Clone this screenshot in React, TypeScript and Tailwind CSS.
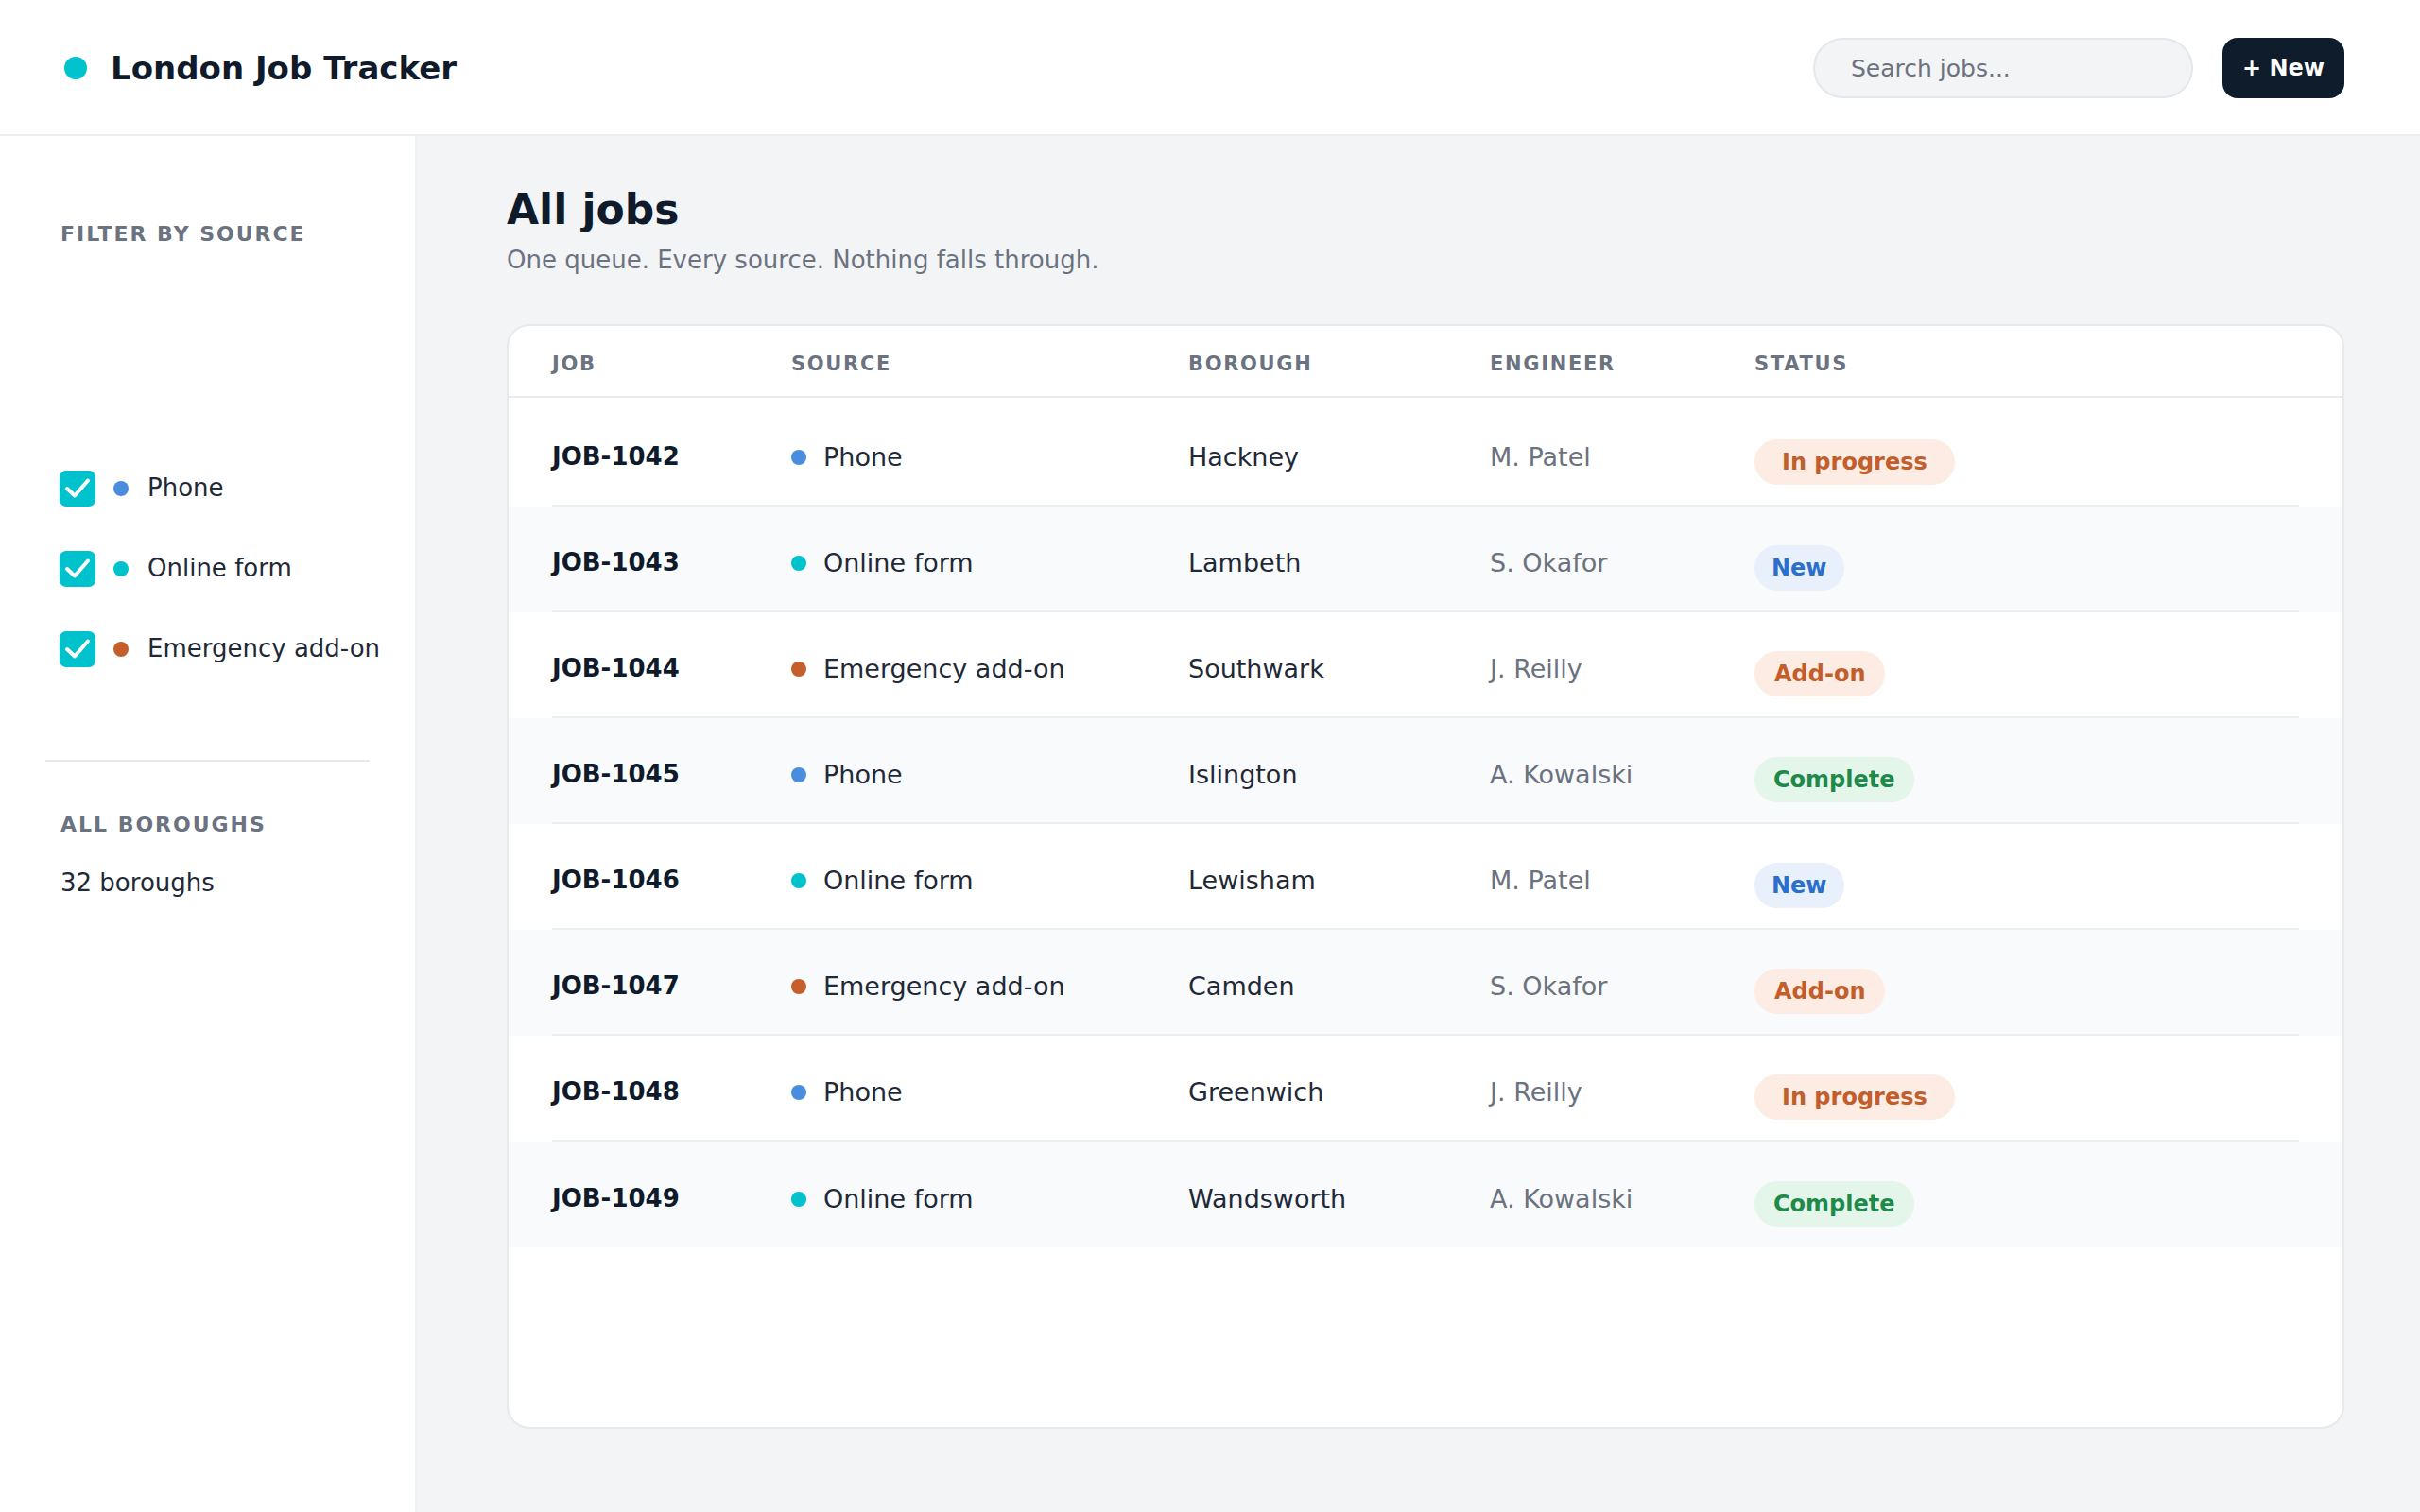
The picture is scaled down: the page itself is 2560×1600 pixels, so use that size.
type Status = "In progress" | "New" | "Add-on" | "Complete";

type Job = {
  id: string;
  source: "Phone" | "Online form" | "Emergency add-on";
  borough: string;
  engineer: string;
  status: Status;
};

const jobs: Job[] = [
  { id: "JOB-1042", source: "Phone", borough: "Hackney", engineer: "M. Patel", status: "In progress" },
  { id: "JOB-1043", source: "Online form", borough: "Lambeth", engineer: "S. Okafor", status: "New" },
  { id: "JOB-1044", source: "Emergency add-on", borough: "Southwark", engineer: "J. Reilly", status: "Add-on" },
  { id: "JOB-1045", source: "Phone", borough: "Islington", engineer: "A. Kowalski", status: "Complete" },
  { id: "JOB-1046", source: "Online form", borough: "Lewisham", engineer: "M. Patel", status: "New" },
  { id: "JOB-1047", source: "Emergency add-on", borough: "Camden", engineer: "S. Okafor", status: "Add-on" },
  { id: "JOB-1048", source: "Phone", borough: "Greenwich", engineer: "J. Reilly", status: "In progress" },
  { id: "JOB-1049", source: "Online form", borough: "Wandsworth", engineer: "A. Kowalski", status: "Complete" },
];

const dotColor: Record<Job["source"], string> = {
  Phone: "bg-[#4a8ddf]",
  "Online form": "bg-[#00c2cc]",
  "Emergency add-on": "bg-[#c45e2c]",
};

const badgeStyle: Record<Status, string> = {
  "In progress": "bg-[#fdece3] text-[#c25e2b] px-[29px]",
  New: "bg-[#e8f0fc] text-[#2a6fcb] px-[18px]",
  "Add-on": "bg-[#fdece3] text-[#c25e2b] px-[21px]",
  Complete: "bg-[#e4f5ea] text-[#1e8a4a] px-[20px]",
};

const cols = "grid grid-cols-[253px_420px_319px_280px_1fr]";

function Checkbox() {
  return (
    <div className="w-[38px] h-[38px] rounded-[7px] bg-[#00c2cc] flex items-center justify-center shrink-0">
      <svg width="38" height="38" viewBox="0 0 38 38" fill="none">
        <path d="M8 19 L16 26.5 L30 10.5" stroke="white" strokeWidth="4" strokeLinecap="round" strokeLinejoin="round" />
      </svg>
    </div>
  );
}

function Sidebar() {
  const sources: Job["source"][] = ["Phone", "Online form", "Emergency add-on"];
  return (
    <aside className="w-[441px] shrink-0 bg-white border-r-2 border-[#eef0f3] px-[48px] pt-[87px]">
      <div className="px-[16px]">
        <h3 className="text-[22px] leading-[33px] font-bold tracking-[0.09em] text-[#6b7280]">FILTER BY SOURCE</h3>
      </div>
      <div className="mt-[233px] px-[15px] flex flex-col gap-[46px]">
        {sources.map((s) => (
          <label key={s} className="h-[39px] flex items-center whitespace-nowrap">
            <Checkbox />
            <span className={`ml-[19px] w-4 h-4 rounded-full shrink-0 ${dotColor[s]}`} />
            <span className="ml-[20px] text-[26px] leading-[39px] text-[#1f2937]">{s}</span>
          </label>
        ))}
      </div>
      <div className="mt-[98px] h-[2px] bg-[#e7e9ed]" />
      <div className="px-[16px] mt-[50px]">
        <h3 className="text-[22px] leading-[33px] font-bold tracking-[0.09em] text-[#6b7280]">ALL BOROUGHS</h3>
        <p className="mt-[26px] text-[26px] leading-[39px] text-[#1f2937]">32 boroughs</p>
      </div>
    </aside>
  );
}

function JobsTable() {
  return (
    <div className="flex-1 bg-white border-2 border-[#e7e9ed] rounded-[24px] overflow-hidden">
      <div className={`${cols} h-[76px] border-b-2 border-[#e9ebef] px-[46px] items-center pt-[7px]`}>
        {["JOB", "SOURCE", "BOROUGH", "ENGINEER", "STATUS"].map((h) => (
          <div key={h} className="text-[21px] font-bold tracking-[0.08em] text-[#6b7280]">
            {h}
          </div>
        ))}
      </div>
      {jobs.map((job, i) => (
        <div key={job.id} className={i % 2 === 1 ? "bg-[#f9fafb]" : "bg-white"}>
          <div
            className={`${cols} mx-[46px] items-center ${i === 0 ? "h-[115px] pt-[4px]" : "h-[112px] pt-[1px]"} ${
              i < jobs.length - 1 ? "border-b-2 border-[#eceef1]" : ""
            }`}
          >
            <div className="pt-[7px] text-[26px] leading-[39px] font-bold text-[#0f1b2a]">{job.id}</div>
            <div className="pt-[7px] flex items-center gap-[18px]">
              <span className={`w-4 h-4 rounded-full mt-[2px] shrink-0 ${dotColor[job.source]}`} />
              <span className="text-[27px] leading-[39px] text-[#1f2937]">{job.source}</span>
            </div>
            <div className="pt-[7px] text-[27px] leading-[39px] text-[#1f2937]">{job.borough}</div>
            <div className="pt-[7px] text-[27px] leading-[39px] text-[#6b7280]">{job.engineer}</div>
            <div className="pt-[18px]">
              <span
                className={`inline-flex items-center h-[48px] rounded-full text-[24px] font-bold ${badgeStyle[job.status]}`}
              >
                {job.status}
              </span>
            </div>
          </div>
        </div>
      ))}
    </div>
  );
}

export default function App() {
  return (
    <div className="h-[1600px] flex flex-col font-['DejaVu_Sans',sans-serif] bg-white">
      <header className="h-[144px] shrink-0 border-b-2 border-[#eceef1] flex items-center justify-between pl-[68px] pr-[80px] pt-[2px]">
        <div className="flex items-center gap-[25px]">
          <span className="w-6 h-6 rounded-full bg-[#00c2cc]" />
          <h1 className="text-[34px] font-bold text-[#0f1b2a]">London Job Tracker</h1>
        </div>
        <div className="flex items-center gap-[31px]">
          <input
            type="text"
            placeholder="Search jobs..."
            className="w-[402px] h-[64px] rounded-full border-2 border-[#e5e7eb] bg-[#f3f4f6] pl-[38px] text-[25px] text-[#1f2937] placeholder:text-[#6b7280] outline-none"
          />
          <button className="h-[64px] px-[21px] rounded-[16px] bg-[#0e1c2c] text-white text-[24px] font-bold">
            + New
          </button>
        </div>
      </header>
      <div className="flex-1 flex min-h-0">
        <Sidebar />
        <main className="flex-1 bg-[#f3f4f6] pl-[95px] pr-[80px] pt-[52px] pb-[88px] flex flex-col">
          <h2 className="text-[44px] leading-[52px] font-bold text-[#0f1b2a]">All jobs</h2>
          <p className="mt-[8px] text-[26px] leading-[39px] text-[#6b7280]">
            One queue. Every source. Nothing falls through.
          </p>
          <div className="mt-[48px] flex-1 flex flex-col">
            <JobsTable />
          </div>
        </main>
      </div>
    </div>
  );
}
